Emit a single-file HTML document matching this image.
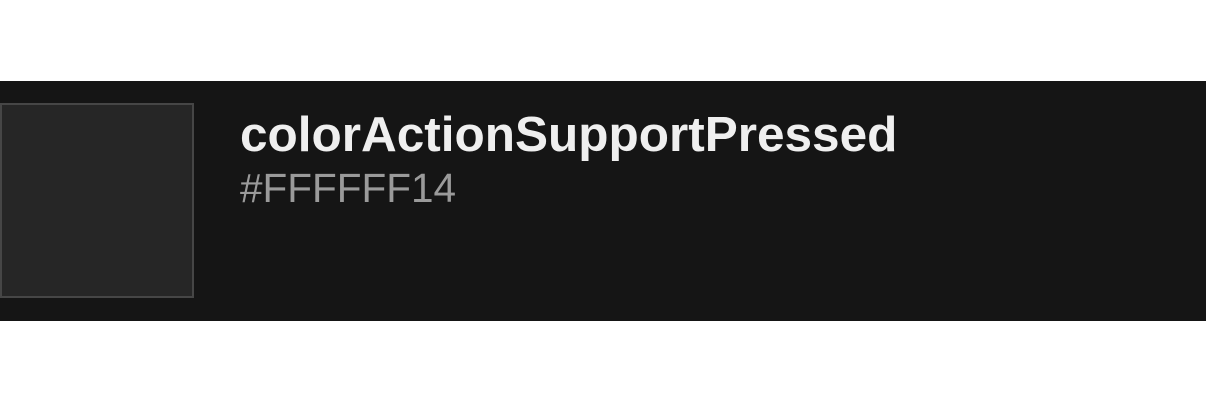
<!DOCTYPE html>
<html><head><style>
html,body{margin:0;padding:0;background:#fff;width:1206px;height:402px;overflow:hidden;font-family:"Liberation Sans",sans-serif}
.band{position:absolute;left:0;top:81px;width:1206px;height:240px;background:#151515}
.sw{position:absolute;left:0;top:103px;width:194px;height:195px;border:2px solid #464646;background:#262626;box-sizing:border-box}
.t{position:absolute;left:240px;top:105px;font-size:49.5px;font-weight:bold;color:#efefef;line-height:60px;white-space:nowrap}
.h{position:absolute;left:240px;top:164px;font-size:40.5px;color:#9a9a9a;line-height:48px;white-space:nowrap}
</style></head><body>
<div class="band"></div>
<div class="sw"></div>
<div class="t">colorActionSupportPressed</div>
<div class="h">#FFFFFF14</div>
</body></html>
